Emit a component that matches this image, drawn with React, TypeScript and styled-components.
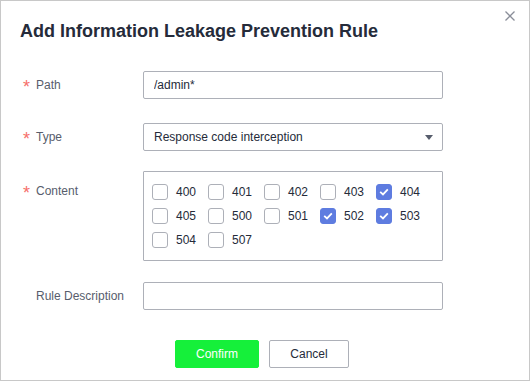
import React from "react";
import styled, { createGlobalStyle } from "styled-components";

const GlobalStyle = createGlobalStyle`
  html, body {
    margin: 0;
    padding: 0;
    background: #ffffff;
  }
  body {
    font-family: "Liberation Sans", Arial, sans-serif;
  }
`;

const CODES = [
  { code: "400", checked: false },
  { code: "401", checked: false },
  { code: "402", checked: false },
  { code: "403", checked: false },
  { code: "404", checked: true },
  { code: "405", checked: false },
  { code: "500", checked: false },
  { code: "501", checked: false },
  { code: "502", checked: true },
  { code: "503", checked: true },
  { code: "504", checked: false },
  { code: "507", checked: false },
];

const App: React.FC = () => {
  return (
    <>
      <GlobalStyle />
      <Dialog>
        <CloseButton aria-label="close">
          <svg width="10" height="10" viewBox="0 0 10 10">
            <path
              d="M0.5 0.5 L9.5 9.5 M9.5 0.5 L0.5 9.5"
              stroke="#8a8e99"
              strokeWidth="1.3"
              fill="none"
            />
          </svg>
        </CloseButton>
        <Title>Add Information Leakage Prevention Rule</Title>

        <Form>
          <FormItem>
            <Label $required>Path</Label>
            <Input defaultValue="/admin*" />
          </FormItem>

          <FormItem $spacing={24}>
            <Label $required>Type</Label>
            <Select>
              <span>Response code interception</span>
              <svg width="8" height="5" viewBox="0 0 8 5">
                <path d="M0 0 L8 0 L4 5 Z" fill="#575d6c" />
              </svg>
            </Select>
          </FormItem>

          <FormItem $spacing={20}>
            <Label $required $offset={6}>
              Content
            </Label>
            <CheckPanel>
              {CODES.map((item) => (
                <CheckItem key={item.code}>
                  <CheckBox $checked={item.checked}>
                    {item.checked && (
                      <svg width="10" height="8" viewBox="0 0 10 8">
                        <path
                          d="M1.2 3.8 L4 6.4 L8.8 1.4"
                          stroke="#ffffff"
                          strokeWidth="1.8"
                          fill="none"
                        />
                      </svg>
                    )}
                  </CheckBox>
                  {item.code}
                </CheckItem>
              ))}
            </CheckPanel>
          </FormItem>

          <FormItem $spacing={21}>
            <Label>Rule Description</Label>
            <Input />
          </FormItem>
        </Form>

        <Footer>
          <Button $primary>Confirm</Button>
          <Button>Cancel</Button>
        </Footer>
      </Dialog>
    </>
  );
};

const Dialog = styled.div`
  position: relative;
  box-sizing: border-box;
  width: 530px;
  height: 381px;
  border: 1px solid #c8c8c8;
  background: #ffffff;
  padding: 18px 0 0 0;
`;

const CloseButton = styled.button`
  position: absolute;
  top: 9px;
  right: 13px;
  width: 12px;
  height: 12px;
  padding: 1px;
  border: none;
  background: transparent;
  display: flex;
  align-items: center;
  justify-content: center;
  cursor: pointer;
`;

const Title = styled.h2`
  margin: 0 0 0 19px;
  font-size: 18px;
  line-height: 24px;
  font-weight: 700;
  color: #252b3a;
`;

const Form = styled.div`
  display: flex;
  flex-direction: column;
  padding: 28px 0 0 0;
`;

const FormItem = styled.div<{ $spacing?: number }>`
  display: flex;
  align-items: flex-start;
  margin-top: ${(p) => p.$spacing ?? 0}px;
  margin-left: 22px;
`;

const Label = styled.label<{ $required?: boolean; $offset?: number }>`
  position: relative;
  box-sizing: border-box;
  width: 120px;
  flex-shrink: 0;
  padding-left: 13px;
  margin-top: ${(p) => p.$offset ?? 0}px;
  font-size: 12px;
  line-height: 28px;
  color: #575d6c;

  &::before {
    content: ${(p) => (p.$required ? '"*"' : '""')};
    position: absolute;
    left: 0;
    top: 2px;
    font-size: 18px;
    line-height: 28px;
    color: #f66f6a;
  }
`;

const fieldBox = `
  box-sizing: border-box;
  width: 300px;
  height: 28px;
  border: 1px solid #adb0b8;
  border-radius: 2px;
  background: #ffffff;
  padding: 0 10px;
  font-family: "Liberation Sans", Arial, sans-serif;
  font-size: 12px;
  color: #252b3a;
`;

const Input = styled.input`
  ${fieldBox}
  outline: none;
`;

const Select = styled.div`
  ${fieldBox}
  display: flex;
  align-items: center;
  justify-content: space-between;
  padding-right: 9px;
`;

const CheckPanel = styled.div`
  box-sizing: border-box;
  width: 300px;
  height: 90px;
  border: 1px solid #adb0b8;
  border-radius: 1px;
  padding: 8px 0 0 8px;
  display: grid;
  grid-template-columns: repeat(5, 56px);
  grid-auto-rows: 24px;
  align-content: start;
`;

const CheckItem = styled.div`
  display: flex;
  align-items: center;
  gap: 8px;
  font-size: 12px;
  color: #252b3a;
`;

const CheckBox = styled.span<{ $checked?: boolean }>`
  box-sizing: border-box;
  width: 16px;
  height: 16px;
  border-radius: 3px;
  border: 1px solid ${(p) => (p.$checked ? "#5e7ce0" : "#adb0b8")};
  background: ${(p) => (p.$checked ? "#5e7ce0" : "#ffffff")};
  display: flex;
  align-items: center;
  justify-content: center;
`;

const Footer = styled.div`
  display: flex;
  justify-content: center;
  gap: 10px;
  margin-top: 30px;
  padding-right: 6px;
`;

const Button = styled.button<{ $primary?: boolean }>`
  box-sizing: border-box;
  min-width: 80px;
  height: 28px;
  padding: 0 20px;
  border-radius: 2px;
  font-family: "Liberation Sans", Arial, sans-serif;
  font-size: 12px;
  cursor: pointer;
  border: 1px solid ${(p) => (p.$primary ? "#15f03a" : "#adb0b8")};
  background: ${(p) => (p.$primary ? "#15f03a" : "#ffffff")};
  color: ${(p) => (p.$primary ? "#ffffff" : "#252b3a")};
`;

export default App;
